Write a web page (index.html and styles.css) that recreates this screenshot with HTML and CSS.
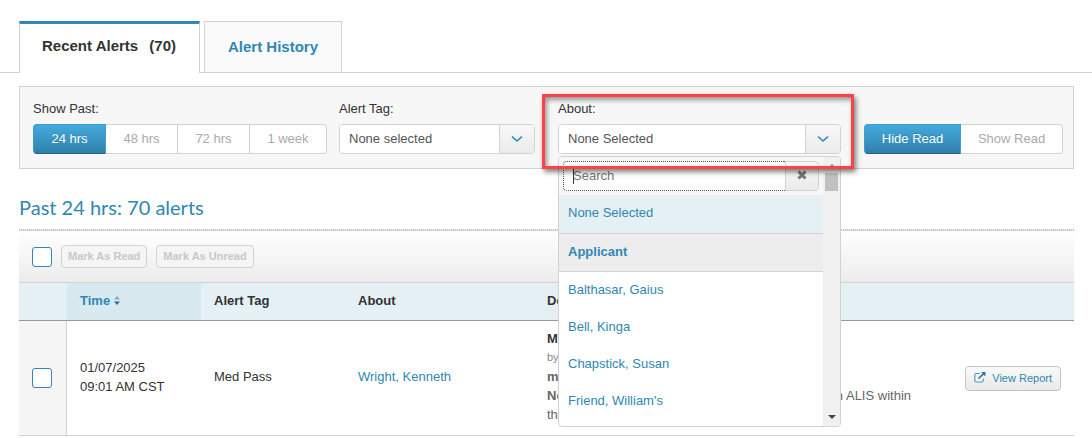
FILE: index.html
```html
<!DOCTYPE html>
<html lang="en">
<head>
  <meta charset="UTF-8">
  <meta name="viewport" content="width=device-width, initial-scale=1.0">
  <title>Recent Alerts</title>
  <link rel="stylesheet" href="styles.css">
</head>
<body>
  <nav class="tabs">
    <a class="tab active" href="#recent">Recent Alerts <span class="count">(70)</span></a>
    <a class="tab" href="#history">Alert History</a>
  </nav>

  <main class="content">
    <form class="filters">
      <div class="field field-past">
        <span class="label">Show Past:</span>
        <div class="btn-group">
          <button type="button" class="btn active">24 hrs</button>
          <button type="button" class="btn">48 hrs</button>
          <button type="button" class="btn">72 hrs</button>
          <button type="button" class="btn">1 week</button>
        </div>
      </div>

      <div class="field field-tag">
        <label class="label" for="alert-tag">Alert Tag:</label>
        <div class="select">
          <select id="alert-tag"><option>None selected</option></select>
          <span class="select-arrow">
            <svg width="12" height="8" viewBox="0 0 12 8"><path d="M1 1.500l5 4.500 5-4.500" fill="none" stroke="#2f87b3" stroke-width="1.600"/></svg>
          </span>
        </div>
      </div>

      <div class="field field-about">
        <label class="label" for="about">About:</label>
        <div class="select">
          <select id="about"><option>None Selected</option></select>
          <span class="select-arrow">
            <svg width="12" height="8" viewBox="0 0 12 8"><path d="M1 1.500l5 4.500 5-4.500" fill="none" stroke="#2f87b3" stroke-width="1.600"/></svg>
          </span>
        </div>

        <div class="menu">
          <div class="menu-list">
            <div class="search">
              <input type="text" class="search-input" placeholder="Search" aria-label="Search">
              <button type="button" class="search-clear" aria-label="Clear">
                <svg width="10" height="10" viewBox="0 0 10 10"><path d="M1.5 1.5l7 7M8.5 1.5l-7 7" stroke="#777" stroke-width="3"/></svg>
              </button>
            </div>
            <a class="option selected" href="#none">None Selected</a>
            <div class="option-group">Applicant</div>
            <a class="option" href="#balthasar">Balthasar, Gaius</a>
            <a class="option" href="#bell">Bell, Kinga</a>
            <a class="option" href="#chapstick">Chapstick, Susan</a>
            <a class="option" href="#friend">Friend, William's</a>
          </div>
          <div class="scrollbar">
            <svg width="8" height="4" viewBox="0 0 8 4"><path d="M0 4l4-4 4 4z" fill="#8a8a8a"/></svg>
            <span class="thumb"></span>
            <svg width="8" height="4" viewBox="0 0 8 4"><path d="M0 0h8l-4 4z" fill="#444"/></svg>
          </div>
        </div>
      </div>

      <div class="field field-read">
        <div class="btn-group">
          <button type="button" class="btn active">Hide Read</button>
          <button type="button" class="btn">Show Read</button>
        </div>
      </div>
    </form>

    <h2 class="title">Past 24 hrs: 70 alerts</h2>

    <div class="toolbar">
      <input type="checkbox" class="check" aria-label="Select all">
      <button type="button" class="btn-small" disabled>Mark As Read</button>
      <button type="button" class="btn-small" disabled>Mark As Unread</button>
    </div>

    <table class="alerts">
      <thead>
        <tr>
          <th class="col-check"></th>
          <th class="col-time">Time
            <svg width="6" height="9" viewBox="0 0 6 9"><path d="M0 3.5L3 0l3 3.5z" fill="#9aa7ad"/><path d="M0 5.5h6L3 9z" fill="#2a6f9e"/></svg>
          </th>
          <th class="col-tag">Alert Tag</th>
          <th class="col-about">About</th>
          <th>De</th>
          <th class="col-action"></th>
        </tr>
      </thead>
      <tbody>
        <tr>
          <td class="cell-check"><input type="checkbox" class="check" aria-label="Select alert"></td>
          <td>01/07/2025<br>09:01 AM CST</td>
          <td>Med Pass</td>
          <td><a href="#resident">Wright, Kenneth</a></td>
          <td class="details">
            <div class="details-title">M</div>
            <div class="details-by">by</div>
            <div><b>m</b></div>
            <div class="details-note"><b>No</b><span>n ALIS within</span></div>
            <div>th</div>
          </td>
          <td class="cell-action">
            <a class="btn-report" href="#report">
              <svg width="12" height="11" viewBox="0 0 12 11"><path d="M6 1.5H2Q.8 1.5.8 2.7v6.1Q.8 10 2 10h6q1.200 0 1.200-1.200V6.500" fill="none" stroke="#5a9cc0" stroke-width="1.200"/><path d="M4.500 6.500L9.500 1.800" stroke="#2a78a5" stroke-width="1.700"/><path d="M7 0h4.500v4.500z" fill="#2a78a5"/></svg>
              View Report
            </a>
          </td>
        </tr>
      </tbody>
    </table>
  </main>
</body>
</html>
```

FILE: styles.css
```css
* {
  box-sizing: border-box;
}

body {
  margin: 0;
  background: #fff;
  color: #333;
  font: 13px/19px "Liberation Sans", Arial, sans-serif;
}

a {
  color: #2f87b3;
  text-decoration: none;
}

button,
input,
select {
  font: inherit;
}

/* Tabs */
.tabs {
  display: flex;
  gap: 4px;
  padding: 21px 19px 0;
  background: linear-gradient(#d2d2d2, #d2d2d2) bottom / 100% 1px no-repeat;
}

.tab {
  padding: 15px 23px 16px;
  border: 1px solid #d2d2d2;
  background: #fafafa;
  font-size: 15px;
  font-weight: bold;
}

.tab.active {
  padding: 12px 23px 18px 22px;
  border-top: 3px solid #2f87b3;
  border-bottom: 0;
  background: #fff;
  color: #333;
}

.count {
  margin-left: 7px;
}

.content {
  padding: 0 18px 0 19px;
}

/* Filters */
.filters {
  display: flex;
  align-items: flex-end;
  margin-top: 13px;
  padding: 13px 10px 14px 13px;
  border: 1px solid #d2d2d2;
  background: #f7f7f7;
}

.field-past {
  width: 294px;
}

.field-tag {
  width: 196px;
  margin: 0 23px 0 12px;
}

.field-about {
  position: relative;
  flex: 1;
  margin-right: 23px;
}

.field-read {
  width: 199px;
}

/* red callout around the open filter */
.field-about::after {
  content: "";
  position: absolute;
  z-index: 3;
  inset: -6px -13px -15px -16px;
  border: 3px solid #fb4245;
  box-shadow: 2px 3px 5px rgba(0, 0, 0, 0.5), inset 2px 3px 5px rgba(0, 0, 0, 0.4);
  pointer-events: none;
}

.label {
  display: block;
  margin-bottom: 6px;
  line-height: 18px;
}

.btn-group {
  display: flex;
}

.btn {
  flex: 1 0 auto;
  height: 30px;
  padding: 0 16px 2px;
  border: 1px solid #d2d2d2;
  border-left: 0;
  background: #fff;
  color: #aaa;
}

.btn:first-child {
  border-left: 1px solid #d2d2d2;
  border-radius: 4px 0 0 4px;
}

.btn:last-child {
  border-radius: 0 4px 4px 0;
}

.btn.active {
  border-color: #3a9ed0 #3a9ed0 #1f6285;
  background: linear-gradient(#43aadd, #3181ab);
  color: #fff;
  text-shadow: 0 -1px 0 rgba(0, 0, 0, 0.15);
}

.select {
  display: flex;
  height: 30px;
  border: 1px solid #d2d2d2;
  border-radius: 4px;
  background: #fff;
  overflow: hidden;
}

.select select {
  flex: 1;
  min-width: 0;
  padding: 0 9px 2px;
  border: 0;
  outline: 0;
  appearance: none;
  background: #fff;
  color: #555;
}

.select-arrow {
  display: flex;
  align-items: center;
  justify-content: center;
  width: 35px;
  border-left: 1px solid #d2d2d2;
  background: linear-gradient(#f8f8f8, #ebebeb);
}

/* Open menu */
.menu {
  position: absolute;
  z-index: 2;
  top: 100%;
  left: 0;
  right: 0;
  display: flex;
  margin-top: 2px;
  border: 1px solid #d2d2d2;
  border-radius: 4px;
  background: #fff;
  overflow: hidden;
}

.menu-list {
  flex: 1;
  padding-bottom: 6px;
}

.search {
  display: flex;
  padding: 4px;
  background: #f7f7f7;
}

.search-input {
  flex: 1;
  min-width: 0;
  height: 30px;
  padding: 0 9px 2px;
  border: 1px dotted #555;
  border-right: 0;
  border-radius: 4px 0 0 4px;
  outline: 0;
  background: #fff linear-gradient(#333, #333) 9px 7px / 1px 15px no-repeat;
  color: #555;
}

.search-clear {
  display: flex;
  align-items: center;
  justify-content: center;
  width: 34px;
  height: 30px;
  padding: 0 0 2px;
  border: 1px solid #d2d2d2;
  border-radius: 0 4px 4px 0;
  background: linear-gradient(#f8f8f8, #ebebeb);
}

.option,
.option-group {
  display: block;
  padding: 8px 9px 10px;
  color: #2f87b3;
}

.option.selected {
  padding-bottom: 11px;
  background: #e5f0f5;
}

.option-group {
  border: solid #d2d2d2;
  border-width: 1px 0;
  background: #ededed;
  font-weight: bold;
}

.scrollbar {
  display: flex;
  flex-direction: column;
  align-items: center;
  width: 17px;
  padding: 7px 0;
  background: #f1f1f1;
}

.thumb {
  width: 13px;
  height: 18px;
  margin: 5px 0 auto;
  background: #c1c1c1;
}

/* List */
.title {
  margin: 26px 0 0;
  padding-bottom: 10px;
  border-bottom: 1px dotted #bbb;
  color: #2f87b3;
  font: 20px/24px Lato, sans-serif;
}

.toolbar {
  display: flex;
  align-items: center;
  gap: 9px;
  height: 53px;
  padding: 0 13px;
  border: solid #d2d2d2;
  border-width: 1px 0;
  background: linear-gradient(#fff, #ececec);
}

.check {
  display: block;
  width: 20px;
  height: 20px;
  margin: 0;
  border: 1px solid #2f87b3;
  border-radius: 3px;
  appearance: none;
  background: #fff;
}

.btn-small {
  height: 23px;
  padding: 0 6px;
  border: 1px solid #d2d2d2;
  border-radius: 4px;
  background: #f5f5f5;
  color: #c8c8c8;
  font-size: 11px;
  font-weight: bold;
}

.alerts {
  width: 100%;
  border-spacing: 0;
  table-layout: fixed;
}

.alerts th {
  padding: 8px 13px 10px;
  border-bottom: 1px solid #999;
  background: #e5f0f5;
  text-align: left;
}

.alerts td {
  padding: 8px 13px 11px;
  border-bottom: 1px solid #d2d2d2;
}

.col-check {
  width: 48px;
}

.alerts .col-time {
  width: 134px;
  background: #d8e9f0;
  color: #2f87b3;
}

.col-tag {
  width: 144px;
}

.col-about {
  width: 189px;
}

.col-action {
  width: 150px;
}

.alerts .cell-check {
  padding: 10px 13px;
  border-right: 1px solid #d2d2d2;
  background: #f5f5f5;
}

.details {
  color: #666;
}

.details-title {
  color: #333;
  font-weight: bold;
}

.details-by {
  color: #888;
  font-size: 11px;
}

.details-note {
  display: flex;
  justify-content: space-between;
}

.alerts .cell-action {
  padding: 10px 13px;
  text-align: right;
}

.btn-report {
  display: inline-flex;
  gap: 6px;
  padding: 2px 8px;
  border: 1px solid #c4c4c4;
  border-radius: 4px;
  background: linear-gradient(#fafafa, #e9e9e9);
  font-size: 11px;
}

.btn-report svg {
  margin-top: 3px;
}
```
